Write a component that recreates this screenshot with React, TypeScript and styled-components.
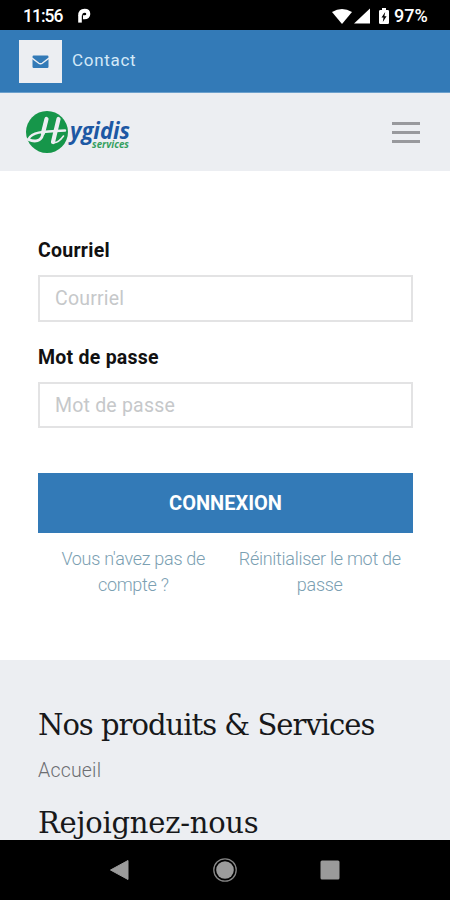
import React from "react";
import styled, { createGlobalStyle } from "styled-components";

const GlobalStyle = createGlobalStyle`
  * { box-sizing: border-box; }
  body { margin: 0; background: #fff; font-family: Roboto, "Liberation Sans", sans-serif; }
`;

const Screen = styled.div`
  width: 450px;
  height: 900px;
  display: flex;
  flex-direction: column;
  overflow: hidden;
  background: #fff;
`;

const StatusBar = styled.div`
  height: 30px;
  flex: none;
  display: flex;
  align-items: center;
  justify-content: space-between;
  padding: 1px 21px 0 23px;
  background: #000;
  color: #fff;
  font-size: 17px;
  font-weight: 500;
`;

const StatusGroup = styled.div`
  display: flex;
  align-items: center;
`;

const Clock = styled.span`
  width: 54px;
  letter-spacing: -1px;
  font-size: 17.5px;
`;

const Battery = styled.span`
  width: 35px;
  font-size: 18px;
`;

const ContactBar = styled.div`
  height: 63px;
  flex: none;
  display: flex;
  align-items: flex-start;
  padding: 10px 19px 0;
  background: #337ab7;
  border-bottom: 1px solid #6ba0cd;
`;

const MailBox = styled.div`
  width: 43px;
  height: 43px;
  display: grid;
  place-items: center;
  background: #eceef2;
`;

const ContactLink = styled.a`
  margin: 9px 0 0 10px;
  color: #d3e9f8;
  font-size: 17px;
  line-height: 22px;
  letter-spacing: 0.7px;
`;

const Header = styled.header`
  height: 78px;
  flex: none;
  display: flex;
  align-items: center;
  justify-content: space-between;
  padding: 0 30px 0 24px;
  background: #eceef2;
`;

const MenuButton = styled.button`
  width: 28px;
  padding: 0;
  border: 0;
  background: none;
  display: flex;
  flex-direction: column;
  gap: 6px;
`;

const MenuLine = styled.span`
  height: 3px;
  background: #98999d;
`;

const LoginForm = styled.form`
  height: 489px;
  flex: none;
  display: flex;
  flex-direction: column;
  padding: 67px 37px 0 38px;
`;

const Label = styled.label`
  height: 37px;
  line-height: 26px;
  color: #111;
  font-size: 19.5px;
  font-weight: 700;
  letter-spacing: 0.25px;
`;

const Input = styled.input<{ $height: number; $gap: number }>`
  width: 100%;
  height: ${(p) => p.$height}px;
  flex: none;
  margin: 0 0 ${(p) => p.$gap}px;
  padding: 0 15px;
  border: 2px solid #e3e3e4;
  border-radius: 0;
  background: #fff;
  font: 400 19.5px Roboto, sans-serif;
  letter-spacing: 0.2px;
  outline: none;
  &::placeholder { color: #c6c8ca; opacity: 1; }
`;

const Submit = styled.button`
  height: 60px;
  flex: none;
  padding: 0;
  border: 0;
  background: #337ab7;
  color: #fff;
  font: 700 20px Roboto, sans-serif;
`;

const Links = styled.div`
  display: grid;
  grid-template-columns: 1fr 1fr;
  padding: 13px 0 0 2px;
`;

const FormLink = styled.a`
  padding: 0 8px;
  color: #7ba0b2;
  font-size: 18px;
  font-weight: 300;
  line-height: 26px;
  letter-spacing: -0.28px;
  text-align: center;
`;

const Footer = styled.footer`
  flex: 1;
  min-height: 0;
  overflow: hidden;
  padding: 43px 38px 0;
  background: #eceef2;
`;

const FooterTitle = styled.h2<{ $spacing: number }>`
  height: 44px;
  margin: 0;
  color: #17181a;
  font-family: "Roboto Slab", "DejaVu Serif", serif;
  font-size: 29px;
  font-weight: 400;
  line-height: 45px;
  letter-spacing: ${(p) => p.$spacing}px;
  white-space: nowrap;
`;

const FooterLink = styled.a`
  display: block;
  height: 54px;
  padding-top: 12px;
  color: #6d6e72;
  font-size: 19.5px;
  font-weight: 300;
  line-height: 24px;
  letter-spacing: 0.2px;
`;

const NavBar = styled.nav`
  height: 60px;
  flex: none;
  display: flex;
  align-items: center;
  justify-content: space-between;
  padding: 0 107px;
  background: #000;
`;

const ParkingIcon = () => (
  <svg width="15" height="16" viewBox="0 0 15 16" fill="none" stroke="#fff">
    <path d="M3.2 7.5C3.2 4 5 2.7 7.6 2.7C10 2.7 11.3 4.2 11.3 6C11.3 8 9.8 9.3 7.6 9.3H6" strokeWidth="4" />
    <path d="M3 7V14.6" strokeWidth="3.6" />
  </svg>
);

const SignalIcons = () => (
  <svg width="62" height="18" viewBox="0 0 62 18" fill="#fff">
    <path d="M0 5Q10 -1 20 5L10 17Z" />
    <path d="M38 1.5V16.5H22Z" />
    <path d="M48.5 3H50V1H54V3H55.8Q57 3 57 4.2V15.8Q57 17 55.8 17H48.4Q47 17 47 15.8V4.2Q47 3 48.5 3Z" />
    <path d="M53.2 5L49.5 10.6H51.5L50.8 15L54.6 9.2H52.4Z" fill="#000" />
  </svg>
);

const MailIcon = () => (
  <svg width="17" height="14" viewBox="0 0 17 14">
    <rect x="0.5" y="0.5" width="16" height="12.5" rx="1.2" fill="#337ab7" />
    <path d="M0 3L6.8 8.2Q8.5 9.4 10.2 8.2L17 3" fill="none" stroke="#eceef2" strokeWidth="1.4" />
  </svg>
);

const Logo = () => (
  <svg width="110" height="48" viewBox="0 0 110 48" role="img" aria-label="Hygidis services">
    <circle cx="23" cy="24" r="21" fill="#16964a" />
    <g fill="none" stroke="#eceef2" strokeLinecap="round">
      <path d="M22.5 11L18.5 27C17 33 11 34.5 4.5 31.5" strokeWidth="3" />
      <path d="M22.5 11L19 25" strokeWidth="4.2" />
      <path d="M4.5 31C8 24.5 16 23.5 41 22.5" strokeWidth="2.4" />
      <path d="M34.5 11L29 34" strokeWidth="4.2" />
      <path d="M29 34.5Q34 35.5 39.5 28" strokeWidth="1.6" />
    </g>
    <text x="46" y="31" fill="#1d58a4" fontFamily="Open Sans, Noto Sans, sans-serif" fontSize="22.5" fontWeight="700" fontStyle="italic" textLength="60" lengthAdjust="spacingAndGlyphs">ygidis</text>
    <text x="68" y="40" fill="#35a060" fontFamily="Open Sans, Noto Sans, sans-serif" fontSize="10" fontWeight="700" fontStyle="italic" textLength="37" lengthAdjust="spacingAndGlyphs">services</text>
  </svg>
);

const BackIcon = () => (
  <svg width="24" height="24" viewBox="0 0 24 24">
    <path d="M3.5 12L21 2.5V21.5Z" fill="#9b9b9b" stroke="#9b9b9b" strokeLinejoin="round" />
  </svg>
);

const HomeIcon = () => (
  <svg width="26" height="26" viewBox="0 0 26 26">
    <circle cx="13" cy="13" r="11.2" fill="none" stroke="#858585" strokeWidth="1.3" />
    <circle cx="13" cy="13" r="8.8" fill="#9b9b9b" />
  </svg>
);

const RecentIcon = () => (
  <svg width="24" height="24" viewBox="0 0 24 24">
    <rect x="1.5" y="2.5" width="19" height="19" rx="1.5" fill="#9b9b9b" />
  </svg>
);

export default function App() {
  return (
    <>
      <GlobalStyle />
      <Screen>
        <StatusBar>
          <StatusGroup>
            <Clock>11:56</Clock>
            <ParkingIcon />
          </StatusGroup>
          <StatusGroup>
            <SignalIcons />
            <Battery>97%</Battery>
          </StatusGroup>
        </StatusBar>
        <ContactBar>
          <MailBox><MailIcon /></MailBox>
          <ContactLink>Contact</ContactLink>
        </ContactBar>
        <Header>
          <Logo />
          <MenuButton aria-label="Menu">
            <MenuLine />
            <MenuLine />
            <MenuLine />
          </MenuButton>
        </Header>
        <LoginForm>
          <Label htmlFor="email">Courriel</Label>
          <Input id="email" type="email" placeholder="Courriel" $height={47} $gap={23} />
          <Label htmlFor="password">Mot de passe</Label>
          <Input id="password" type="password" placeholder="Mot de passe" $height={46} $gap={45} />
          <Submit type="button">CONNEXION</Submit>
          <Links>
            <FormLink>Vous n'avez pas de compte ?</FormLink>
            <FormLink>Réinitialiser le mot de passe</FormLink>
          </Links>
        </LoginForm>
        <Footer>
          <FooterTitle $spacing={-0.98}>Nos produits &amp; Services</FooterTitle>
          <FooterLink>Accueil</FooterLink>
          <FooterTitle $spacing={-0.25}>Rejoignez-nous</FooterTitle>
        </Footer>
        <NavBar>
          <BackIcon />
          <HomeIcon />
          <RecentIcon />
        </NavBar>
      </Screen>
    </>
  );
}
